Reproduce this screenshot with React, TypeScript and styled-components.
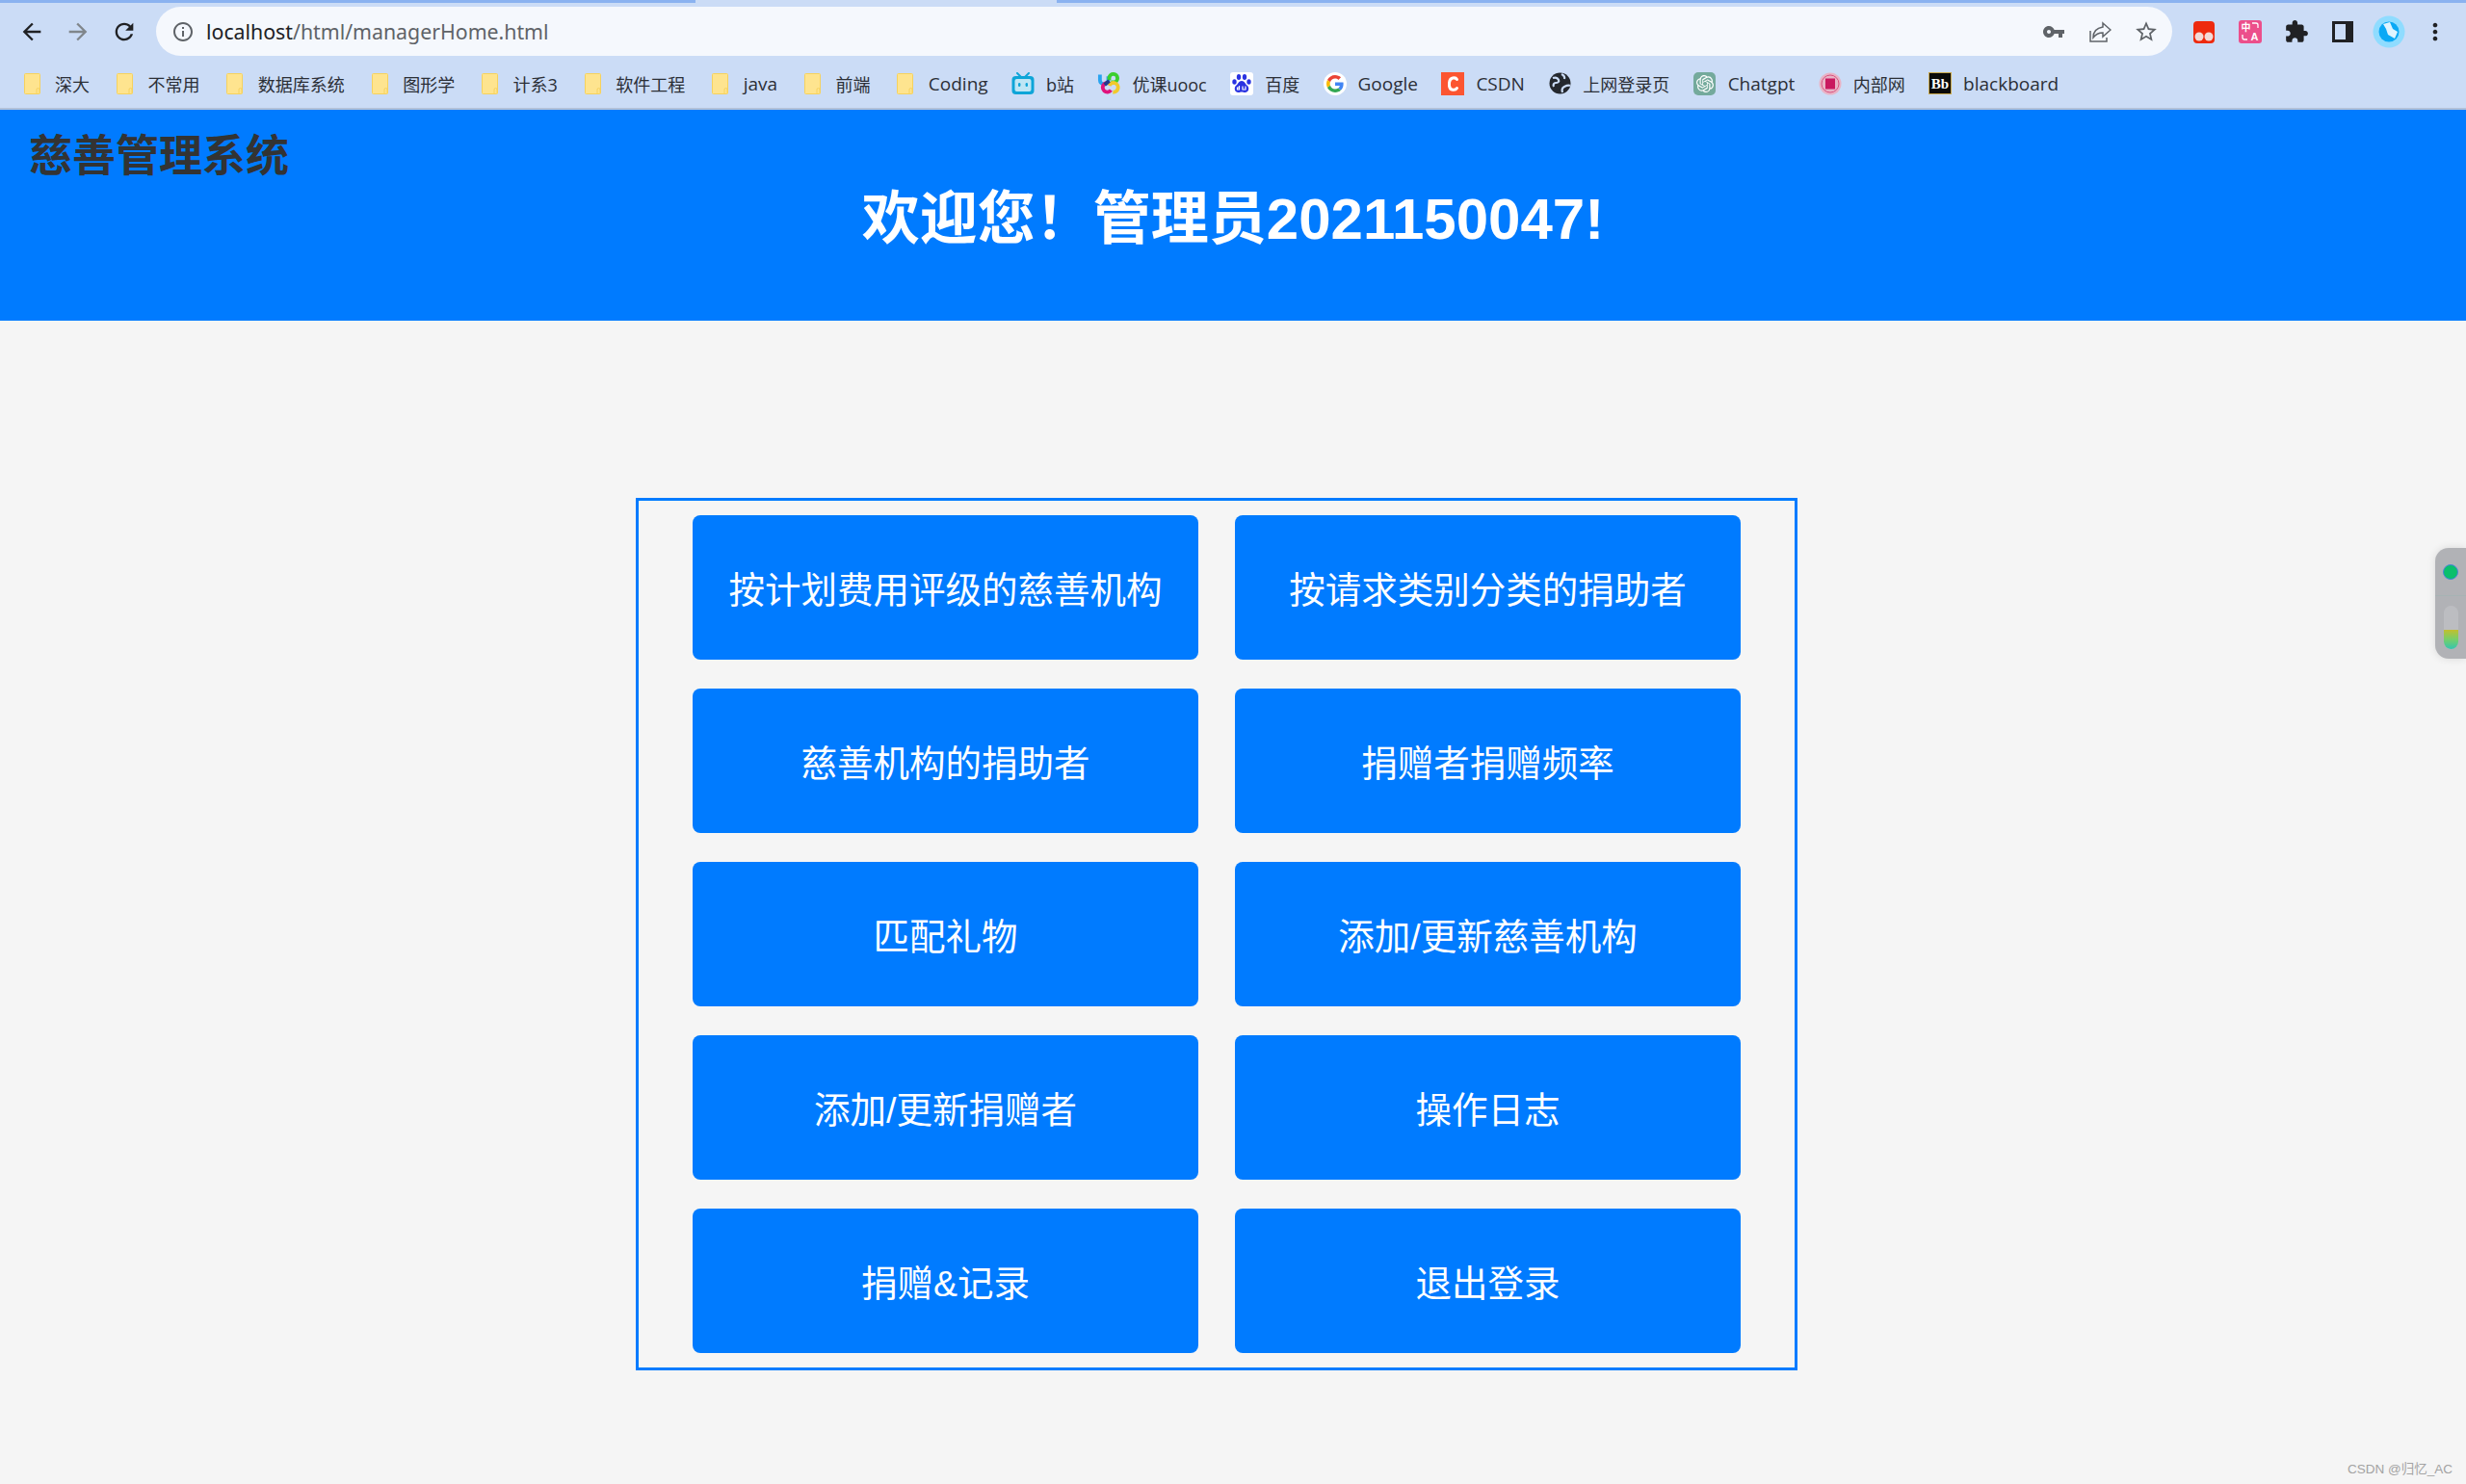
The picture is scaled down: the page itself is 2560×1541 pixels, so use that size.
import React from 'react'
import styled, { createGlobalStyle } from 'styled-components'
import { SiOpenai } from 'react-icons/si'

const CJK_STACK = `"Liberation Sans", "Noto Sans CJK SC", sans-serif`
const UI_STACK = `"Open Sans", "Noto Sans CJK SC", sans-serif`

const GlobalStyle = createGlobalStyle`
  html, body {
    margin: 0;
    padding: 0;
    background: #f5f5f5;
  }
  * {
    box-sizing: border-box;
  }
`

const Page = styled.div`
  position: relative;
  width: 2560px;
  height: 1541px;
  overflow: hidden;
  background: #f5f5f5;
  font-family: ${CJK_STACK};
`

const Browser = styled.div`
  height: 114px;
  background: #cbdcf6;
  border-bottom: 2px solid #b2c1d9;
`

const TabStrip = styled.div`
  display: flex;
  height: 3px;
  background: #8ab2f0;
`

const TabSegment = styled.div<{ $width: number }>`
  width: ${(p) => p.$width}px;
  background: #cbdcf6;
  margin-left: 722px;
`

const Toolbar = styled.div`
  display: flex;
  align-items: center;
  height: 51px;
  margin-top: 4px;
  padding: 0 8px 0 9px;
`

const ToolSlot = styled.div<{ $color?: string; $narrow?: boolean }>`
  flex: none;
  display: flex;
  align-items: center;
  justify-content: center;
  width: ${(p) => (p.$narrow ? 24 : 48)}px;
  height: 48px;
  color: ${(p) => p.$color || '#202124'};
`

const AddressBar = styled.div`
  flex: 1;
  display: flex;
  align-items: center;
  height: 51px;
  margin: 0 9px;
  padding: 0 3px 0 16px;
  border-radius: 26px;
  background: #f5f8fd;
`

const Url = styled.div`
  flex: 1;
  margin-left: 12px;
  font-family: "Noto Sans", sans-serif;
  font-size: 21.3px;
  color: #5f6368;
  white-space: nowrap;
  b {
    font-weight: 400;
    color: #202124;
  }
`

const BookmarkRow = styled.div`
  display: flex;
  align-items: center;
  gap: 24.4px;
  height: 54px;
  padding: 3px 0 0 21px;
`

const Bookmark = styled.div`
  display: flex;
  align-items: center;
  gap: 12px;
  color: #2b2f36;
  white-space: nowrap;
`

const BookmarkLabel = styled.span<{ $latin: boolean }>`
  font-family: ${UI_STACK};
  font-size: ${(p) => (p.$latin ? 19 : 18)}px;
`

const IconSlot = styled.div`
  flex: none;
  display: flex;
  align-items: center;
  justify-content: center;
  width: 24px;
  height: 24px;
`

const OpenAiBadge = styled.div`
  display: flex;
  align-items: center;
  justify-content: center;
  width: 23px;
  height: 24px;
  border-radius: 5px;
  background: #74aa9c;
  color: #fff;
`

const Header = styled.header`
  height: 219px;
  background: #007bff;
  padding-top: 22px;
`

const Logo = styled.div`
  padding-left: 30px;
  font-size: 45px;
  line-height: 54px;
  font-weight: 700;
  color: #333;
`

const Title = styled.h1`
  margin: 2px 0 0;
  font-size: 60px;
  line-height: 72px;
  font-weight: 700;
  color: #fff;
  text-align: center;
`

const Frame = styled.main`
  display: grid;
  grid-template-columns: 525px 525px;
  column-gap: 38px;
  row-gap: 30px;
  width: 1206px;
  margin: 184px 0 0 660px;
  padding: 15px 0 15px 56px;
  border: 3px solid #007bff;
`

const ActionButton = styled.button`
  height: 150px;
  padding: 0 0 2px;
  border: 0;
  border-radius: 8px;
  background: #007bff;
  font-family: ${CJK_STACK};
  font-size: 37.5px;
  font-weight: 400;
  color: #fff;
  cursor: pointer;
`

const SidePanel = styled.div`
  position: absolute;
  top: 569px;
  right: 0;
  display: flex;
  flex-direction: column;
  align-items: center;
  width: 32px;
  height: 115px;
  padding-top: 17px;
  border-radius: 14px 0 0 14px;
  background: #b1b2b6;
  box-shadow: 0 0 8px rgba(0, 0, 0, 0.12);
`

const StatusDot = styled.div`
  width: 16px;
  height: 16px;
  border-radius: 50%;
  background: #0abf6c;
  border: 1px solid #4a84d8;
`

const PanelRule = styled.div`
  width: 100%;
  height: 1px;
  margin-top: 16px;
  background: #a6b3b4;
`

const Track = styled.div`
  display: flex;
  align-items: flex-end;
  width: 15px;
  height: 45px;
  margin-top: 10px;
  border-radius: 8px;
  overflow: hidden;
  background: #bcbdc1;
`

const TrackFill = styled.div`
  width: 100%;
  height: 20px;
  background: linear-gradient(#c2bf2e, #76cf6a 50%, #35c5b0);
`

const Watermark = styled.div`
  position: absolute;
  right: 14px;
  bottom: 7px;
  font-family: "Liberation Sans", "Noto Sans CJK SC", sans-serif;
  font-size: 13.5px;
  color: #a3a3a3;
`

const MdIcon = ({ d, size = 28 }: { d: string; size?: number }) => (
  <svg width={size} height={size} viewBox="0 0 24 24" fill="currentColor">
    <path d={d} />
  </svg>
)

const Folder = () => (
  <svg width="17" height="22" viewBox="0 0 17 22">
    <path d="M1.500 0.500h14a1 1 0 0 1 1 1v19a1 1 0 0 1-1 1h-14a1 1 0 0 1-1-1v-19a1 1 0 0 1 1-1z" fill="#fee48f" stroke="#f6d25e" />
    <path d="M13 21v-4a1.500 1.500 0 0 1 3 0v4" fill="none" stroke="#f6d25e" />
  </svg>
)

const Bili = () => (
  <svg width="24" height="24" viewBox="0 0 24 24">
    <path d="M6 1l4 4M18 1l-4 4" stroke="#0ea5d8" strokeWidth="2" strokeLinecap="round" />
    <rect x="0.500" y="4" width="23" height="19" rx="4" fill="#0ea5d8" />
    <rect x="3.500" y="7" width="17" height="13" rx="2" fill="#bfe6f5" />
    <rect x="7" y="11" width="2.400" height="4" rx="1.200" fill="#0ea5d8" />
    <rect x="14.600" y="11" width="2.400" height="4" rx="1.200" fill="#0ea5d8" />
  </svg>
)

const Uooc = () => (
  <svg width="25" height="25" viewBox="0 0 25 25" fill="none" strokeWidth="4">
    <path d="M3 3v6a4.500 4.500 0 0 0 9 0V5" stroke="#2aa4f0" />
    <path d="M13 9V6.500a4.500 4.500 0 1 1 5 5h-3" stroke="#3ccf2d" />
    <path d="M15 14a5 5 0 1 0 0 6" stroke="#e0127c" />
    <path d="M13 15a5 5 0 1 1 4 7" stroke="#f2c92b" />
    <path d="M8 14l5-4" stroke="#223a8f" />
  </svg>
)

const Baidu = () => (
  <svg width="24" height="24" viewBox="0 0 24 24">
    <rect width="24" height="24" rx="3" fill="#fff" />
    <g fill="#2932e1">
      <ellipse cx="4.500" cy="10" rx="2.200" ry="2.800" />
      <ellipse cx="9" cy="5" rx="2.200" ry="3" />
      <ellipse cx="15" cy="5" rx="2.200" ry="3" />
      <ellipse cx="19.500" cy="10" rx="2.200" ry="2.800" />
      <path d="M12 9c3 0 3.500 3 6 5 2.500 2.500 1 7-2.500 7-1.500 0-2-.6-3.500-.6S10 21 8.500 21C5 21 3.500 16.500 6 14c2.500-2 3-5 6-5z" />
    </g>
    <path d="M9.500 14v4H7.500v-2h2M13 14.500v3.500h3v-3.500" fill="none" stroke="#fff" strokeWidth="1.200" />
  </svg>
)

const Google = () => (
  <svg width="24" height="24" viewBox="0 0 48 48">
    <circle cx="24" cy="24" r="24" fill="#fff" />
    <g transform="translate(6 6) scale(0.75)">
      <path fill="#EA4335" d="M24 9.500c3.540 0 6.710 1.220 9.210 3.600l6.850-6.850C35.900 2.380 30.470 0 24 0 14.620 0 6.510 5.380 2.560 13.220l7.980 6.190C12.430 13.720 17.740 9.500 24 9.500z" />
      <path fill="#4285F4" d="M46.980 24.550c0-1.570-.15-3.090-.38-4.550H24v9.020h12.940c-.58 2.960-2.260 5.480-4.780 7.180l7.730 6c4.510-4.180 7.090-10.360 7.090-17.650z" />
      <path fill="#FBBC05" d="M10.530 28.590c-.48-1.450-.76-2.990-.76-4.590s.27-3.140.76-4.590l-7.980-6.190C.92 16.460 0 20.120 0 24c0 3.880.92 7.540 2.560 10.780l7.970-6.190z" />
      <path fill="#34A853" d="M24 48c6.480 0 11.930-2.130 15.890-5.810l-7.730-6c-2.150 1.450-4.920 2.300-8.160 2.300-6.260 0-11.570-4.220-13.470-9.910l-7.980 6.190C6.510 42.620 14.620 48 24 48z" />
    </g>
  </svg>
)

const Csdn = () => (
  <svg width="24" height="24" viewBox="0 0 24 24">
    <rect width="24" height="24" fill="#fc5531" />
    <path d="M16.500 7.500C15 5 9 5 8.500 11v3c.5 5.500 6.500 5 8 2.500" fill="none" stroke="#fff" strokeWidth="3" strokeLinecap="round" />
  </svg>
)

const Globe = () => (
  <svg width="23" height="23" viewBox="0 0 23 23">
    <circle cx="11.500" cy="11.500" r="11" fill="#24282e" />
    <path d="M4 6c3-1 5 0 6 2s-1 3-3 3-3 2-2 4M14 21c-1-3 0-5 2-6s4-2 6-1M13 2c2 1 4 2 3 5" fill="none" stroke="#cbdcf6" strokeWidth="2.200" />
  </svg>
)

const Seal = () => (
  <svg width="24" height="24" viewBox="0 0 24 24">
    <circle cx="12" cy="12" r="11.500" fill="#e9b3c6" />
    <circle cx="12" cy="12" r="9" fill="none" stroke="#d9527f" strokeWidth="1" />
    <rect x="7" y="6.500" width="10" height="11" fill="#c9195f" />
  </svg>
)

const Blackboard = () => (
  <svg width="24" height="24" viewBox="0 0 24 24">
    <rect x="0.500" y="0.500" width="23" height="22" fill="#0a0a0a" stroke="#c9a84a" />
    <text x="12" y="17" fontFamily='"Liberation Serif", serif' fontSize="15" fontWeight="700" fill="#fff" textAnchor="middle">
      Bb
    </text>
  </svg>
)

const OpenAi = () => (
  <OpenAiBadge>
    <SiOpenai size={18} />
  </OpenAiBadge>
)

const bookmarks: { label: string; Icon: React.FC }[] = [
  { label: '深大', Icon: Folder },
  { label: '不常用', Icon: Folder },
  { label: '数据库系统', Icon: Folder },
  { label: '图形学', Icon: Folder },
  { label: '计系3', Icon: Folder },
  { label: '软件工程', Icon: Folder },
  { label: 'java', Icon: Folder },
  { label: '前端', Icon: Folder },
  { label: 'Coding', Icon: Folder },
  { label: 'b站', Icon: Bili },
  { label: '优课uooc', Icon: Uooc },
  { label: '百度', Icon: Baidu },
  { label: 'Google', Icon: Google },
  { label: 'CSDN', Icon: Csdn },
  { label: '上网登录页', Icon: Globe },
  { label: 'Chatgpt', Icon: OpenAi },
  { label: '内部网', Icon: Seal },
  { label: 'blackboard', Icon: Blackboard },
]

const actions = [
  '按计划费用评级的慈善机构',
  '按请求类别分类的捐助者',
  '慈善机构的捐助者',
  '捐赠者捐赠频率',
  '匹配礼物',
  '添加/更新慈善机构',
  '添加/更新捐赠者',
  '操作日志',
  '捐赠&记录',
  '退出登录',
]

const ICON = {
  back: 'M20 11H7.830l5.590-5.590L12 4l-8 8 8 8 1.410-1.410L7.830 13H20v-2z',
  forward: 'M4 11h12.170l-5.590-5.590L12 4l8 8-8 8-1.410-1.410L16.170 13H4v-2z',
  reload:
    'M17.650 6.350C16.200 4.900 14.210 4 12 4c-4.420 0-7.990 3.580-7.990 8s3.570 8 7.990 8c3.730 0 6.840-2.550 7.730-6h-2.080c-.82 2.330-3.040 4-5.650 4-3.310 0-6-2.690-6-6s2.690-6 6-6c1.660 0 3.140.69 4.220 1.780L13 11h7V4l-2.350 2.350z',
  info: 'M11 7h2v2h-2V7zm0 4h2v6h-2v-6zm1-9C6.480 2 2 6.480 2 12s4.480 10 10 10 10-4.480 10-10S17.520 2 12 2zm0 18c-4.410 0-8-3.590-8-8s3.590-8 8-8 8 3.590 8 8-3.590 8-8 8z',
  key: 'M12.650 10C11.830 7.670 9.610 6 7 6c-3.310 0-6 2.690-6 6s2.690 6 6 6c2.610 0 4.830-1.670 5.650-4H17v4h4v-4h2v-4H12.650zM7 14c-1.100 0-2-.9-2-2s.9-2 2-2 2 .9 2 2-.9 2-2 2z',
  star: 'M22 9.240l-7.190-.62L12 2 9.190 8.630 2 9.240l5.460 4.730L5.820 21 12 17.270 18.180 21l-1.630-7.030L22 9.240zM12 15.400l-3.760 2.270 1-4.280-3.320-2.880 4.380-.38L12 6.100l1.710 4.040 4.380.38-3.320 2.880 1 4.280L12 15.400z',
  puzzle:
    'M20.500 11H19V7c0-1.100-.9-2-2-2h-4V3.500C13 2.120 11.880 1 10.500 1S8 2.120 8 3.500V5H4c-1.100 0-1.990.9-1.990 2v3.800H3.500c1.490 0 2.700 1.210 2.700 2.700s-1.210 2.700-2.700 2.700H2V20c0 1.100.9 2 2 2h3.800v-1.500c0-1.490 1.210-2.700 2.700-2.700 1.490 0 2.700 1.210 2.700 2.700V22H17c1.100 0 2-.9 2-2v-4h1.500c1.380 0 2.500-1.120 2.500-2.500S21.880 11 20.500 11z',
  dots: 'M12 8c1.100 0 2-.9 2-2s-.9-2-2-2-2 .9-2 2 .9 2 2 2zm0 2c-1.100 0-2 .9-2 2s.9 2 2 2 2-.9 2-2-.9-2-2-2zm0 6c-1.100 0-2 .9-2 2s.9 2 2 2 2-.9 2-2-.9-2-2-2z',
}

const ShareIcon = () => (
  <svg width="24" height="24" viewBox="0 0 24 24" fill="none" stroke="#5f6368" strokeWidth="1.500">
    <path d="M2 11v11h17v-4" />
    <path d="M15 3l8 7-8 7v-4c-4 0-7 1-10 5 0-6 4-10 10-11V3z" />
  </svg>
)

const RedExtension = () => (
  <svg width="24" height="24" viewBox="0 0 24 24">
    <rect x="1" y="1" width="22" height="23" rx="4" fill="#ee2a0e" />
    <circle cx="7" cy="17" r="4.500" fill="#f3dad6" />
    <circle cx="17" cy="17" r="4.500" fill="#f3dad6" />
  </svg>
)

const TranslateExtension = () => (
  <svg width="24" height="24" viewBox="0 0 24 24">
    <rect width="24" height="24" rx="3" fill="#ec4f8b" />
    <text x="7.500" y="11" fontFamily='"Noto Sans CJK SC", sans-serif' fontSize="10" fontWeight="700" fill="#fff" textAnchor="middle">
      中
    </text>
    <text x="16.500" y="21" fontFamily='"Liberation Sans", sans-serif' fontSize="11" fontWeight="700" fill="#fff" textAnchor="middle">
      A
    </text>
    <path d="M4 15v3a2 2 0 0 0 2 2h3M14 3h4a2 2 0 0 1 2 2v3" fill="none" stroke="#fff" strokeWidth="1.300" />
  </svg>
)

const SidebarIcon = () => (
  <svg width="22" height="22" viewBox="0 0 22 22">
    <rect x="1.500" y="1.500" width="19" height="19" fill="none" stroke="#202124" strokeWidth="3" />
    <rect x="14" y="1" width="7" height="20" fill="#202124" />
  </svg>
)

const AvatarIcon = () => (
  <svg width="34" height="34" viewBox="0 0 34 34">
    <circle cx="17" cy="17" r="16.500" fill="#8fdcff" />
    <circle cx="17" cy="17" r="10.500" fill="#0aa9f5" />
    <path d="M11 9l7-2 3 7 5 3-3 7-7-4-2-6z" fill="#dff4ff" />
  </svg>
)

const App = () => (
  <Page>
    <GlobalStyle />
    <Browser>
      <TabStrip>
        <TabSegment $width={375} />
      </TabStrip>
      <Toolbar>
        <ToolSlot>
          <MdIcon d={ICON.back} />
        </ToolSlot>
        <ToolSlot $color="#80868b">
          <MdIcon d={ICON.forward} />
        </ToolSlot>
        <ToolSlot>
          <MdIcon d={ICON.reload} />
        </ToolSlot>
        <AddressBar>
          <ToolSlot $color="#5f6368" $narrow>
            <MdIcon d={ICON.info} size={24} />
          </ToolSlot>
          <Url>
            <b>localhost</b>/html/managerHome.html
          </Url>
          <ToolSlot $color="#5f6368">
            <MdIcon d={ICON.key} size={24} />
          </ToolSlot>
          <ToolSlot>
            <ShareIcon />
          </ToolSlot>
          <ToolSlot $color="#5f6368">
            <MdIcon d={ICON.star} size={26} />
          </ToolSlot>
        </AddressBar>
        <ToolSlot>
          <RedExtension />
        </ToolSlot>
        <ToolSlot>
          <TranslateExtension />
        </ToolSlot>
        <ToolSlot>
          <MdIcon d={ICON.puzzle} size={26} />
        </ToolSlot>
        <ToolSlot>
          <SidebarIcon />
        </ToolSlot>
        <ToolSlot>
          <AvatarIcon />
        </ToolSlot>
        <ToolSlot>
          <MdIcon d={ICON.dots} size={28} />
        </ToolSlot>
      </Toolbar>
      <BookmarkRow>
        {bookmarks.map(({ label, Icon }) => (
          <Bookmark key={label}>
            <IconSlot>
              <Icon />
            </IconSlot>
            <BookmarkLabel $latin={/^[A-Za-z]+$/.test(label)}>{label}</BookmarkLabel>
          </Bookmark>
        ))}
      </BookmarkRow>
    </Browser>
    <Header>
      <Logo>慈善管理系统</Logo>
      <Title>欢迎您！管理员2021150047!</Title>
    </Header>
    <Frame>
      {actions.map((label) => (
        <ActionButton key={label}>{label}</ActionButton>
      ))}
    </Frame>
    <SidePanel>
      <StatusDot />
      <PanelRule />
      <Track>
        <TrackFill />
      </Track>
    </SidePanel>
    <Watermark>CSDN @归忆_AC</Watermark>
  </Page>
)

export default App
